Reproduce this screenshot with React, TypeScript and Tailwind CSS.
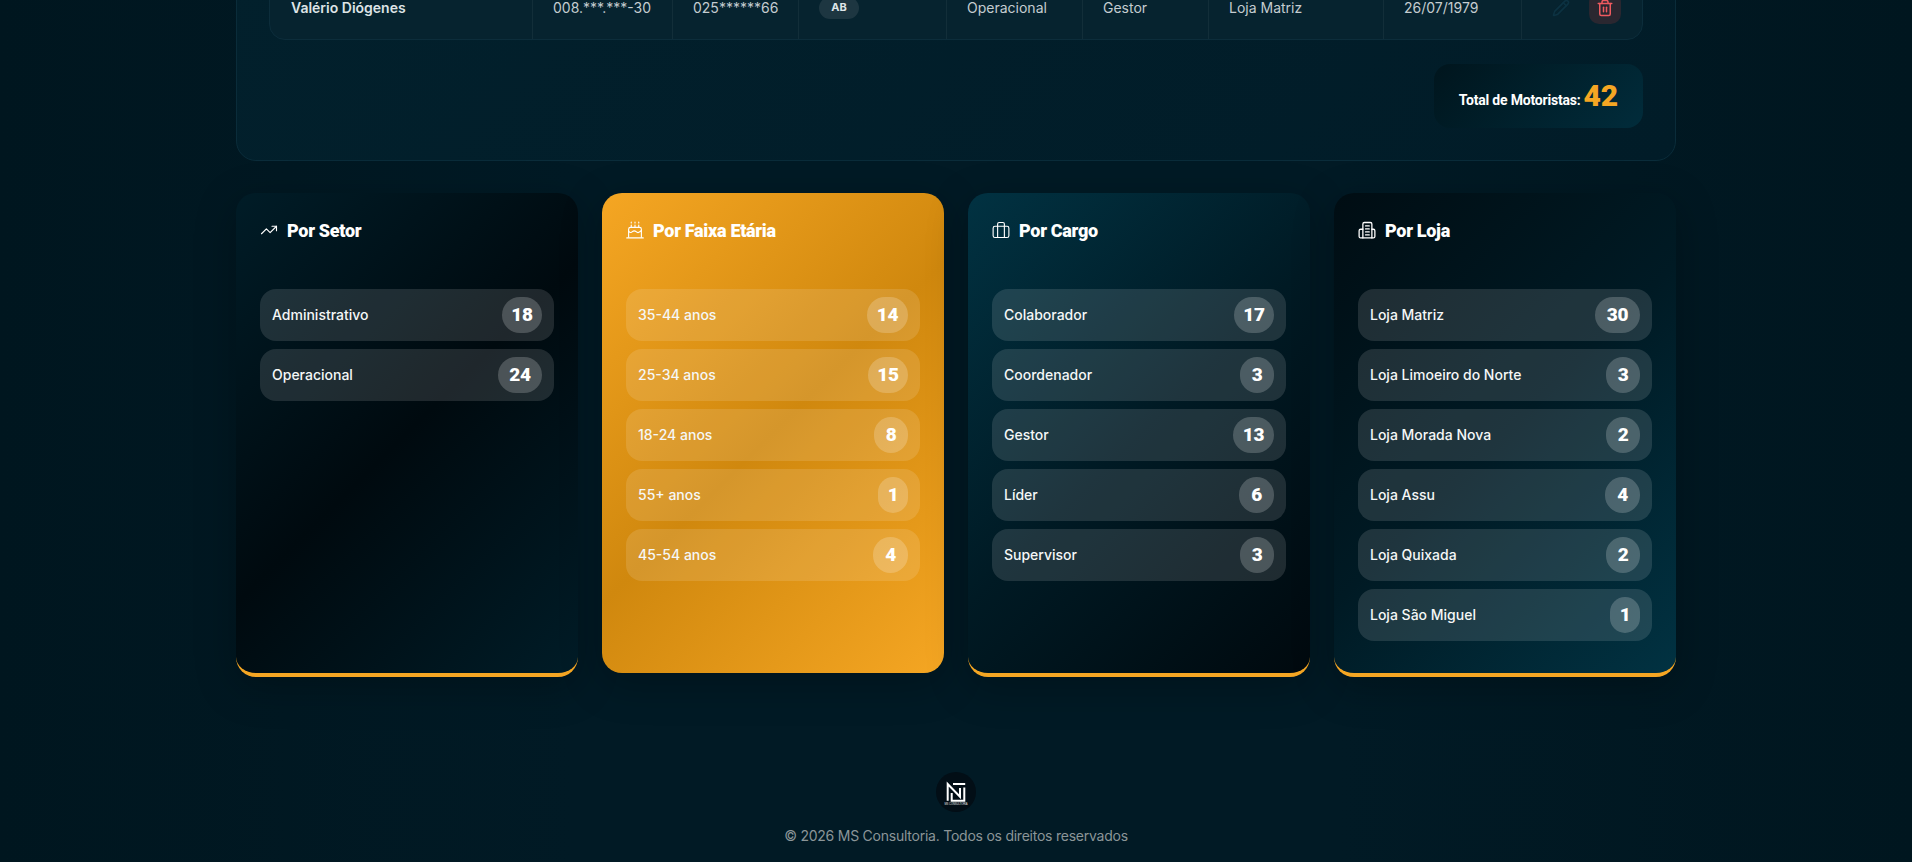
import { TrendingUp, Trash2, Pencil } from "lucide-react";
import type { ReactNode } from "react";

type Item = { label: string; value: string; w: string };

const CakeIcon = () => (
  <svg viewBox="0 0 24 24" className="w-[18px] h-[18px]" fill="none" stroke="currentColor" strokeWidth="1.5" strokeLinecap="round" strokeLinejoin="round">
    <path d="M7 1.5v1M12 1.5v1M17 1.5v1" />
    <path d="M7 8.5V5.5M12 8.5V5.5M17 8.5V5.5" />
    <path d="M3.5 21.5V11a2.5 2.5 0 0 1 2.5-2.5h12a2.5 2.5 0 0 1 2.5 2.5v10.5" />
    <path d="M3.5 13.5c2 2.4 3.4 2.4 5 .8 1.6-1.6 3.4-1.6 5 0 1.6 1.6 3.4 1.6 5 0l2-1.6" />
    <path d="M1 22.5h22" />
  </svg>
);

const CaseIcon = () => (
  <svg viewBox="0 0 24 24" className="w-[18px] h-[18px]" fill="none" stroke="currentColor" strokeWidth="1.5" strokeLinecap="round" strokeLinejoin="round">
    <rect x="1.5" y="7" width="21" height="15" rx="2.5" />
    <path d="M7.5 7V4a2 2 0 0 1 2-2h5a2 2 0 0 1 2 2v3" />
    <path d="M7.5 7v15M16.5 7v15" />
  </svg>
);

const BuildingIcon = () => (
  <svg viewBox="0 0 24 24" className="w-[18px] h-[18px]" fill="none" stroke="currentColor" strokeWidth="1.7" strokeLinecap="round" strokeLinejoin="round">
    <path d="M6.5 22.5V4a2 2 0 0 1 2-2h8a2 2 0 0 1 2 2v18.5" />
    <path d="M6.5 11H3.5a2 2 0 0 0-2 2v7.5a2 2 0 0 0 2 2h17a2 2 0 0 0 2-2V13a2 2 0 0 0-2-2h-2" />
    <path d="M10 6.5h5M10 10.5h5M10 14.5h5M10 18.5h5" />
  </svg>
);

const Logo = () => (
  <svg viewBox="0 0 40 40" className="w-10 h-10">
    <circle cx="20" cy="20" r="20" fill="#020e16" />
    <path d="M11.7 28.7V12L24 24.7V16" fill="none" stroke="#fff" strokeWidth="2" />
    <path d="M17 12h12.2M28.3 15.5v13.2H15.7V21" fill="none" stroke="#fff" strokeWidth="2" />
    <text x="20" y="33.4" textAnchor="middle" fontSize="2.6" fill="#e8e8e8" fontFamily="Liberation Sans, sans-serif">MS CONSULTORIA</text>
  </svg>
);

function Card({ title, icon, items, cls }: { title: string; icon: ReactNode; items: Item[]; cls: string }) {
  return (
    <section className={`rounded-[20px] p-6 shadow-[0_10px_40px_rgba(0,0,0,0.25)] ${cls}`}>
      <h3 className="flex items-center gap-[9px] h-7 mb-11 pb-[2px] text-white text-[18px] font-black font-['Roboto',sans-serif] tracking-[-0.3px]">
        {icon}
        {title}
      </h3>
      <ul className="flex flex-col gap-2">
        {items.map((it) => (
          <li key={it.label} className="flex items-center justify-between h-[52px] pl-3 pr-3 rounded-2xl bg-white/[0.12]">
            <span className="text-sm font-medium text-[#f5f7f7]">{it.label}</span>
            <span className={`flex items-center justify-center h-9 rounded-[18px] bg-white/20 text-white text-[19px] font-black font-['Roboto',sans-serif] tracking-[-0.3px] ${it.w}`}>
              {it.value}
            </span>
          </li>
        ))}
      </ul>
    </section>
  );
}

const setor: Item[] = [
  { label: "Administrativo", value: "18", w: "w-10" },
  { label: "Operacional", value: "24", w: "w-11" },
];
const faixa: Item[] = [
  { label: "35-44 anos", value: "14", w: "w-[41px]" },
  { label: "25-34 anos", value: "15", w: "w-10" },
  { label: "18-24 anos", value: "8", w: "w-[34px]" },
  { label: "55+ anos", value: "1", w: "w-[30px]" },
  { label: "45-54 anos", value: "4", w: "w-[35px]" },
];
const cargo: Item[] = [
  { label: "Colaborador", value: "17", w: "w-10" },
  { label: "Coordenador", value: "3", w: "w-[34px]" },
  { label: "Gestor", value: "13", w: "w-[41px]" },
  { label: "Líder", value: "6", w: "w-[35px]" },
  { label: "Supervisor", value: "3", w: "w-[34px]" },
];
const loja: Item[] = [
  { label: "Loja Matriz", value: "30", w: "w-[45px]" },
  { label: "Loja Limoeiro do Norte", value: "3", w: "w-[34px]" },
  { label: "Loja Morada Nova", value: "2", w: "w-[34px]" },
  { label: "Loja Assu", value: "4", w: "w-[35px]" },
  { label: "Loja Quixada", value: "2", w: "w-[34px]" },
  { label: "Loja São Miguel", value: "1", w: "w-[30px]" },
];

const cell = "h-full flex items-center border-r border-white/[0.05] pl-5 pb-[2px] text-sm text-[#c4ccd0]";

export default function App() {
  return (
    <div className="h-[862px] overflow-hidden bg-[linear-gradient(90deg,#00161f_0%,#011a25_30%,#011a25_70%,#00161f_100%)] font-['Inter',sans-serif]">
      <div className="w-[1440px] mx-auto -mt-[55px]">
        <div className="rounded-[20px] border border-[#0a2c3a] bg-[linear-gradient(135deg,#02202c,#011c28)] p-8">
          <div className="rounded-2xl border border-[#0c2d3b] bg-[#06232f] overflow-hidden">
            <div className="grid grid-cols-[263px_140px_126px_148px_136px_126px_175px_138px_1fr] h-[60px] items-center">
              <div className={`${cell} !font-semibold !text-[#dde3e6] pl-[21px]`}>Valério Diógenes</div>
              <div className={cell}>008.***.***-30</div>
              <div className={cell}>025******66</div>
              <div className={cell}>
                <span className="flex items-center justify-center w-10 h-[22px] rounded-full bg-[#1d3641] text-[11px] font-bold text-[#dfe5e8]">AB</span>
              </div>
              <div className={cell}>Operacional</div>
              <div className={cell}>Gestor</div>
              <div className={cell}>Loja Matriz</div>
              <div className={cell}>26/07/1979</div>
              <div className="h-full flex items-center gap-[19px] pl-[30px] pb-[2px]">
                <Pencil className="w-[18px] h-[18px] text-[#0c3242]" strokeWidth={2} />
                <span className="flex items-center justify-center w-8 h-8 rounded-[10px] bg-[#2a2730]">
                  <Trash2 className="w-[18px] h-[18px] text-[#ee5a5f]" strokeWidth={2} />
                </span>
              </div>
            </div>
          </div>
          <div className="flex justify-end mt-6">
            <div className="flex items-center justify-center gap-[3px] w-[209px] h-16 rounded-2xl bg-[linear-gradient(135deg,#00151d,#012c3b)]">
              <span className="text-white text-sm font-bold tracking-[-0.2px] font-['Roboto',sans-serif] mt-[8px]">Total de Motoristas:</span>
              <span className="text-[#f5a623] text-[30px] leading-none font-black font-['Roboto',sans-serif]">42</span>
            </div>
          </div>
        </div>

        <div className="grid grid-cols-4 gap-6 mt-8 items-start">
          <Card title="Por Setor" icon={<TrendingUp className="w-[18px] h-[18px]" strokeWidth={1.5} />} items={setor} cls="h-[484px] border-b-4 border-[#f5a623] bg-[linear-gradient(135deg,#001c27_0%,#000a0f_50%,#001c27_100%)]" />
          <Card title="Por Faixa Etária" icon={<CakeIcon />} items={faixa} cls="h-[480px] bg-[linear-gradient(135deg,#f5a623_0%,#d0880e_50%,#f5a623_100%)]" />
          <Card title="Por Cargo" icon={<CaseIcon />} items={cargo} cls="h-[484px] border-b-4 border-[#f5a623] bg-[linear-gradient(135deg,#013242_0%,#001a24_50%,#00090e_100%)]" />
          <Card title="Por Loja" icon={<BuildingIcon />} items={loja} cls="h-[484px] border-b-4 border-[#f5a623] bg-[linear-gradient(135deg,#000d13_0%,#001a24_50%,#013242_100%)]" />
        </div>

        <footer className="flex flex-col items-center mt-[95px]">
          <Logo />
          <p className="mt-[14px] text-sm tracking-[-0.24px] text-[#8b9598]">© 2026 MS Consultoria. Todos os direitos reservados</p>
        </footer>
      </div>
    </div>
  );
}
